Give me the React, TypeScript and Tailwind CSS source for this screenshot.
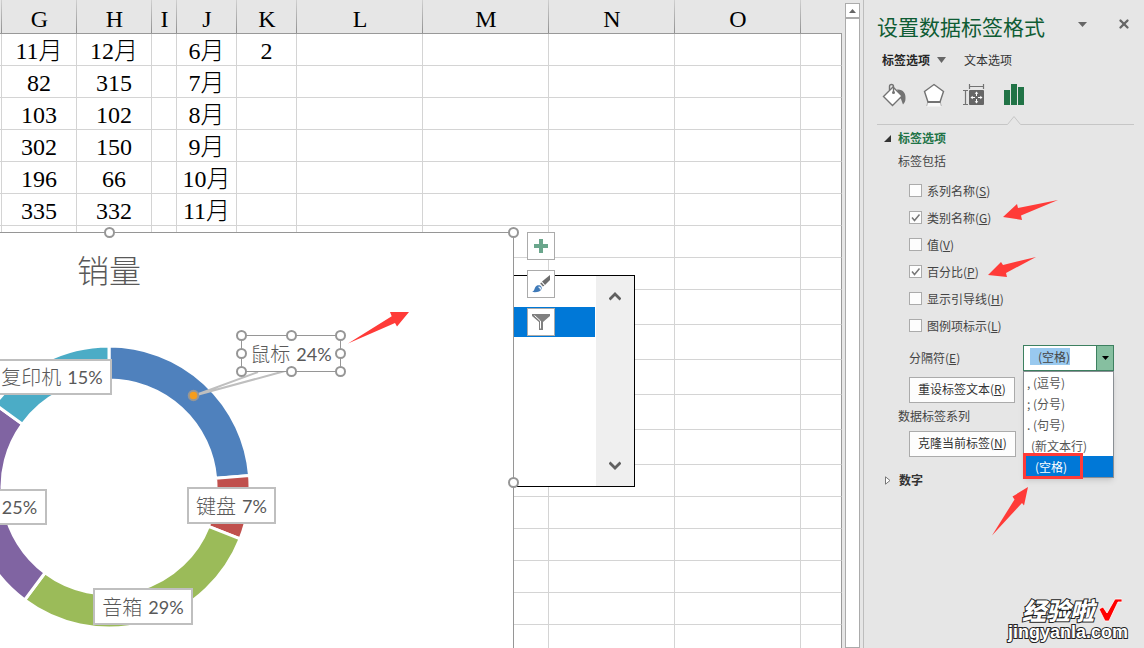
import React, { useState } from 'react';
import { X } from 'lucide-react';

const COLUMNS = [
  { key: 'F', width: 'w-[2px]', title: '' },
  { key: 'G', width: 'w-[75px]', title: 'G' },
  { key: 'H', width: 'w-[75px]', title: 'H' },
  { key: 'I', width: 'w-[25px]', title: 'I' },
  { key: 'J', width: 'w-[60px]', title: 'J' },
  { key: 'K', width: 'w-[60px]', title: 'K' },
  { key: 'L', width: 'w-[126px]', title: 'L' },
  { key: 'M', width: 'w-[126px]', title: 'M' },
  { key: 'N', width: 'w-[126px]', title: 'N' },
  { key: 'O', width: 'w-[126px]', title: 'O' },
  { key: 'P', width: '', title: '' },
];

const ROWS: { cells: string[]; tall?: boolean }[] = [
  { cells: ['', '11月', '12月', '', '6月', '2'] },
  { cells: ['', '82', '315', '', '7月'] },
  { cells: ['', '103', '102', '', '8月'] },
  { cells: ['', '302', '150', '', '9月'] },
  { cells: ['', '196', '66', '', '10月'] },
  { cells: ['', '335', '332', '', '11月'] },
  { cells: [] },
  { cells: [] },
  { cells: [], tall: true },
  { cells: [], tall: true },
  { cells: [], tall: true },
  { cells: [], tall: true },
  { cells: [], tall: true },
  { cells: [] },
  { cells: [] },
  { cells: [] },
  { cells: [] },
  { cells: [] },
  { cells: [] },
];

// 实际占比，标签上显示的是取整后的值
const SLICES = [
  { percent: 23.7, color: '#4f81bd' },
  { percent: 7.3, color: '#c0504d' },
  { percent: 29.2, color: '#9bbb59' },
  { percent: 24.8, color: '#8064a2' },
  { percent: 15, color: '#4bacc6' },
];

const LABELS = [
  { name: '复印机', percent: '15%', box: '-left-2 top-[126px] w-[120px] h-9 border-2 border-[#bfbfbf]' },
  { name: '', percent: '25%', box: '-left-2 top-[256px] w-[55px] h-9 border-2 border-[#bfbfbf]' },
  { name: '键盘', percent: '7%', box: 'left-[187px] top-[254px] w-[89px] h-[37px] border-2 border-[#bfbfbf]' },
  { name: '音箱', percent: '29%', box: 'left-[93px] top-[355px] w-[100px] h-[37px] border-2 border-[#bfbfbf]' },
  { name: '鼠标', percent: '24%', box: 'left-[241px] top-[102px] w-[100px] h-[37px] border border-[#969696]' },
];

const HANDLES = [
  [109, 232], [513, 232], [513, 482],
  [241, 335], [291, 335], [340, 335],
  [241, 353], [340, 353],
  [241, 371], [291, 371], [340, 371],
];

const OPTIONS = [
  { id: 'series', text: '系列名称', hotkey: 'S', checked: false },
  { id: 'category', text: '类别名称', hotkey: 'G', checked: true },
  { id: 'value', text: '值', hotkey: 'V', checked: false },
  { id: 'percent', text: '百分比', hotkey: 'P', checked: true },
  { id: 'leader', text: '显示引导线', hotkey: 'H', checked: false },
  { id: 'legend', text: '图例项标示', hotkey: 'L', checked: false },
];

const SEPARATORS = [
  { text: ', (逗号)', pad: 'pl-[3px]' },
  { text: '; (分号)', pad: 'pl-[3px]' },
  { text: '. (句号)', pad: 'pl-[3px]' },
  { text: '(新文本行)', pad: 'pl-[7px]' },
  { text: '(空格)', pad: 'pl-[11px]' },
];

// 圆环图的一段
function slicePath(from: number, to: number) {
  const cx = 109;
  const cy = 487;
  const point = (r: number, p: number) => {
    const a = (p / 100) * Math.PI * 2;
    return `${cx + r * Math.sin(a)} ${cy - r * Math.cos(a)}`;
  };
  return `M${point(141, from)}A141 141 0 0 1 ${point(141, to)}L${point(107, to)}A107 107 0 0 0 ${point(107, from)}Z`;
}

function Sheet() {
  return (
    <table className="w-full table-fixed border-separate border-spacing-0 font-['Liberation_Serif','Noto_Sans_CJK_SC',serif] text-2xl text-black">
      <thead>
        <tr>
          {COLUMNS.map((col) => (
            <th
              key={col.key}
              className={`h-[34px] border-b border-[#999] bg-[#e6e6e6] p-0 pt-1 leading-7 font-normal ${col.width} ${
                col.key === 'P' ? '' : 'bg-[linear-gradient(#d0d0d0,#909090)] bg-[length:1px_100%] bg-right bg-no-repeat'
              }`}
            >
              {col.title}
            </th>
          ))}
        </tr>
      </thead>
      <tbody>
        {ROWS.map((row, i) => (
          <tr key={i}>
            {COLUMNS.map((col, j) => (
              <td
                key={col.key}
                className={`border-r border-b border-b-[#d4d4d4] bg-white p-0 text-center align-bottom leading-7 font-light whitespace-nowrap ${
                  row.tall ? 'h-[35px]' : 'h-8'
                } ${col.key === 'P' ? 'border-r-[#999]' : 'border-r-[#d4d4d4]'}`}
              >
                {row.cells[j]}
              </td>
            ))}
          </tr>
        ))}
      </tbody>
    </table>
  );
}

function ListBox() {
  return (
    <div className="absolute top-[275px] left-[513px] flex h-[212px] w-[122px] border border-black bg-white">
      <div className="flex-1 pt-[31px]">
        <div className="h-[30px] bg-[#0078d7]" />
      </div>
      <div className="ml-px flex w-[38px] flex-col items-center justify-between bg-[#efefef] py-4">
        <button type="button" aria-label="向上">
          <svg viewBox="0 0 12 9" className="h-[9px] w-3">
            <path d="M.5 7.500L6 2l5.500 5.500" fill="none" stroke="#606060" strokeWidth="2.800" />
          </svg>
        </button>
        <button type="button" aria-label="向下">
          <svg viewBox="0 0 12 9" className="h-[9px] w-3">
            <path d="M.5 1.500L6 7l5.500-5.500" fill="none" stroke="#606060" strokeWidth="2.800" />
          </svg>
        </button>
      </div>
    </div>
  );
}

function Chart() {
  let total = 0;
  return (
    <div className="absolute top-[232px] bottom-0 left-0 w-[514px] border-t border-r border-[#969696] bg-white text-[#595959]">
      <svg viewBox="0 233 513 415" className="h-[415px] w-[513px]">
        {SLICES.map((slice) => {
          const from = total;
          total += slice.percent;
          return (
            <path key={slice.color} d={slicePath(from, total)} fill={slice.color} stroke="#fff" strokeWidth="3" />
          );
        })}
        <path d="M258 372L193 396L285 371" fill="#fff" stroke="#bfbfbf" strokeWidth="2" />
      </svg>
      <h2 className="absolute top-[18px] left-[77px] font-['Noto_Sans_CJK_SC',sans-serif] text-[32px] leading-9 font-light">
        销量
      </h2>
      {LABELS.map((label) => (
        <div
          key={label.percent}
          className={`absolute flex items-center justify-center gap-1.5 bg-white font-light whitespace-nowrap ${label.box}`}
        >
          {label.name && (
            <span className="font-['Noto_Sans_CJK_SC',sans-serif] text-xl leading-8">{label.name}</span>
          )}
          <span className="font-[Lato,sans-serif] text-lg leading-8 font-normal">{label.percent}</span>
        </div>
      ))}
      <svg viewBox="0 233 513 415" className="absolute top-0 left-0 h-[415px] w-[513px] overflow-visible">
        {HANDLES.map(([x, y]) => (
          <circle key={`${x}-${y}`} cx={x + 0.5} cy={y + 0.5} r="4.5" fill="#fff" stroke="#969696" strokeWidth="2" />
        ))}
        <circle cx="193.5" cy="395.5" r="4.8" fill="#f59d1c" stroke="#969696" strokeWidth="2" />
        <path d="M348 343.500L391.700 316.300L390 312H409L397 326.500L395 323Z" fill="#ff3b38" />
      </svg>
    </div>
  );
}

function ChartTools() {
  const box = 'flex size-7 items-center justify-center border border-[#ababab] bg-white';
  return (
    <div className="absolute top-[232px] left-[527px] flex flex-col gap-2.5">
      <button type="button" className={box} aria-label="图表元素">
        <svg viewBox="0 0 14 14" className="size-3.5">
          <path d="M5 0h4v5h5v4H9v5H5V9H0V5h5z" fill="#6aa68c" />
        </svg>
      </button>
      <button type="button" className={box} aria-label="图表样式">
        <svg viewBox="0 0 18 18" className="size-[18px]">
          <path d="M18 0v5l-5 5-3-3.500z" fill="#6d6d6d" />
          <path d="M9.500 7L12.500 10.500L11 12L8 8.500z" fill="#6d6d6d" stroke="#fff" strokeWidth=".7" />
          <path d="M0 17c3-1 2-5 5-6.500c3-1.200 5.500 1 4.500 3.500c-1 3-5 3.500-9.500 3z" fill="#3f7ab8" />
          <path d="M6.500 12l1.500 .5 .5 2" fill="none" stroke="#fff" strokeWidth="1.200" />
        </svg>
      </button>
      <button type="button" className={box} aria-label="图表筛选器">
        <svg viewBox="0 0 18 16" className="h-4 w-[18px]">
          <path d="M0 0h18v2l-7 6v8H7V8L0 2z" fill="#808080" />
          <path d="M2.500 1.500l6 5.500v7.500" fill="none" stroke="#fff" strokeWidth="1" />
        </svg>
      </button>
    </div>
  );
}

function PaneIcons() {
  return (
    <div className="flex items-center gap-4 pl-[5px]">
      <button type="button" aria-label="填充与线条">
        <svg viewBox="0 0 24 24" className="size-6">
          <path d="M15 6.500c6-.5 9 4 8.500 9c0 3-1 4.500-2.500 6c-1-2-1-4-3-7z" fill="#737373" />
          <path d="M1.500 13.500L11 4l9 9-9.500 9.500z" fill="#fff" stroke="#737373" strokeWidth="1.400" />
          <path d="M7.500 7V3.500Q7.500 1.500 9.500 1.500T11.500 3.500V9" fill="none" stroke="#737373" strokeWidth="1.400" />
          <circle cx="11.500" cy="9.500" r="1.500" fill="#737373" />
        </svg>
      </button>
      <button type="button" aria-label="效果">
        <svg viewBox="0 0 24 24" className="size-6">
          <path d="M5.500 20h13l.8 3.500h-14.600z" fill="#f8f8f8" />
          <path d="M5.500 20l-.8 3M18.500 20l.8 3" stroke="#b5b5b5" />
          <path d="M12 1.500L21.500 8.500L18 19H6L2.500 8.500z" fill="#fff" stroke="#737373" strokeWidth="1.400" />
          <path d="M5.500 19h13" stroke="#737373" strokeWidth="2" />
        </svg>
      </button>
      <button type="button" aria-label="大小与属性">
        <svg viewBox="0 0 24 24" className="size-6">
          <path d="M7.500 3.500h14M7.500 1v5M21.500 1v5M3.500 7.500v14M1 7.500h5M1 21.500h5" stroke="#737373" fill="none" strokeWidth="1.200" />
          <rect x="7" y="7" width="15" height="15" rx="1" fill="#666" />
          <path d="M14.500 9v4M14.500 16v4M9 14.500h4M16 14.500h4" stroke="#fff" />
          <path d="M14.500 8.500l1.800 2.200h-3.600zM14.500 20.500l1.800-2.200h-3.600zM8.500 14.500l2.200-1.800v3.600zM20.500 14.500l-2.200-1.800v3.600z" fill="#fff" />
        </svg>
      </button>
      <button type="button" aria-label="标签选项">
        <svg viewBox="0 0 24 24" className="size-6">
          <path d="M2 7h6v15H2zM9 1h6v21H9zM16 4h6v18h-6z" fill="#217346" />
        </svg>
      </button>
    </div>
  );
}

function SeparatorSelect() {
  const [value, setValue] = useState('(空格)');
  return (
    <div className="relative w-[91px]">
      <select
        id="separator"
        value={value}
        onChange={(e) => setValue(e.target.value)}
        className="block h-[26px] w-full appearance-none border border-[#3d8060] bg-white bg-[linear-gradient(#99c9ef,#99c9ef)] bg-[length:40px_17px] bg-[position:6px_2px] bg-no-repeat pb-0.5 pl-3.5 text-xs text-[#444]"
      >
        {SEPARATORS.map((item) => (
          <option key={item.text}>{item.text}</option>
        ))}
      </select>
      <span className="pointer-events-none absolute top-0 right-0 flex h-[26px] w-[18px] items-center justify-center border border-[#3d8060] bg-[#86bfa0]">
        <svg viewBox="0 0 7 4" className="h-1 w-[7px]">
          <path d="M0 0h7L3.500 4z" fill="#000" />
        </svg>
      </span>
      <ul
        role="listbox"
        aria-label="分隔符"
        className="absolute top-[26px] left-0 w-full border border-[#8a8f94] bg-white leading-[21px] text-[#555] shadow-md"
      >
        {SEPARATORS.map((item) => (
          <li
            key={item.text}
            role="option"
            aria-selected={item.text === value}
            onClick={() => setValue(item.text)}
            className={`${item.pad} ${item.text === value ? 'bg-[#0078d7] text-white' : ''}`}
          >
            {item.text}
          </li>
        ))}
      </ul>
      <span className="pointer-events-none absolute top-[108px] left-0 h-[26px] w-[60px] border-3 border-[#ff3b38]" />
    </div>
  );
}

function FormatPane() {
  const [checked, setChecked] = useState<string[]>(OPTIONS.filter((o) => o.checked).map((o) => o.id));

  const toggle = (id: string) => {
    setChecked((prev) => (prev.includes(id) ? prev.filter((v) => v !== id) : [...prev, id]));
  };

  const button = 'block h-[26px] border border-[#ababab] bg-[#fdfdfd] px-2 pb-0.5 text-[#333]';

  return (
    <aside className="relative w-[281px] shrink-0 border-l border-[#bdbdbd] bg-[#e6e6e6] pl-[13px] font-['Noto_Sans_CJK_SC',sans-serif] text-xs leading-[18px] text-[#444]">
      <header className="flex items-start justify-between pt-2.5 pr-[13px]">
        <h1 className="text-[21px] leading-8 font-normal text-[#0f5c34]">设置数据标签格式</h1>
        <div className="flex items-center gap-[30px] pt-[7px] text-[#666]">
          <button type="button" aria-label="任务窗格选项">
            <svg viewBox="0 0 9 5" className="h-[5px] w-[9px]">
              <path d="M0 0h9L4.500 5z" fill="#666" />
            </svg>
          </button>
          <button type="button" aria-label="关闭">
            <X size={14} strokeWidth={4} />
          </button>
        </div>
      </header>

      <nav className="mt-[9px] flex items-center pl-[5px] text-[#333]">
        <button type="button" className="flex items-center gap-[7px] font-bold text-[#262626]">
          标签选项
          <svg viewBox="0 0 9 6" className="h-1.5 w-[9px]">
            <path d="M0 0h9L4.500 6z" fill="#666" />
          </svg>
        </button>
        <button type="button" className="ml-[18px]">文本选项</button>
      </nav>

      <div className="mt-3.5">
        <PaneIcons />
      </div>
      <svg viewBox="0 0 257 10" className="mt-2 block h-2.5 w-[257px]">
        <path d="M0 9.500H130.500L137 1.500L143.500 9.500H257" fill="none" stroke="#c6c6c6" />
      </svg>

      <button type="button" className="mt-1 flex items-center gap-[7px] pl-[7px] font-bold text-[#217346]">
        <svg viewBox="0 0 7 7" className="size-[7px]">
          <path d="M7 0v7H0z" fill="#333" />
        </svg>
        标签选项
      </button>
      <p className="mt-[5px] pl-[21px]">标签包括</p>

      <div className="mt-[7px] pl-8">
        {OPTIONS.map((opt) => (
          <label key={opt.id} className="flex h-[27px] items-center gap-[5px]">
            <input
              type="checkbox"
              checked={checked.includes(opt.id)}
              onChange={() => toggle(opt.id)}
              className="peer size-[13px] appearance-none border border-[#ababab] bg-[#fdfdfd]"
            />
            <svg viewBox="0 0 13 13" className="pointer-events-none invisible -ml-[18px] size-[13px] peer-checked:visible">
              <path d="M3 6.500l2.500 3L10.500 3.500" fill="none" stroke="#777" strokeWidth="1.500" />
            </svg>
            <span>
              {opt.text}(<u>{opt.hotkey}</u>)
            </span>
          </label>
        ))}
      </div>

      <div className="mt-1.5 flex items-center justify-between pr-[30px] pl-8">
        <label htmlFor="separator">
          分隔符(<u>E</u>)
        </label>
        <SeparatorSelect />
      </div>
      <div className="mt-1.5 pl-8">
        <button type="button" className={button}>
          重设标签文本(<u>R</u>)
        </button>
      </div>
      <p className="mt-1 pl-[21px]">数据标签系列</p>
      <div className="mt-1.5 pl-8">
        <button type="button" className={button}>
          克隆当前标签(<u>N</u>)
        </button>
      </div>
      <button type="button" className="mt-3.5 flex items-center gap-2 pl-2 font-bold text-[#333]">
        <svg viewBox="0 0 6 9" className="h-[9px] w-1.5">
          <path d="M.5 .8L5 4.500L.5 8.200z" fill="#fff" stroke="#777" />
        </svg>
        数字
      </button>

      {/* 红色箭头 */}
      <svg viewBox="864 0 280 648" className="pointer-events-none absolute top-0 left-0 h-[648px] w-[280px]">
        <g fill="#ff3b38">
          <path d="M1058 200L1018 208L1017 204L1003 217L1022 220L1021 215.500z" />
          <path d="M1036 257L1003 265L1001 262L988 275L1007 277L1006 273z" />
          <path d="M992 535.500L1014.500 499.500L1012.500 496.500L1028 487L1024 505.500L1022 503z" />
        </g>
      </svg>

      <div className="absolute right-4 bottom-1.5 text-right font-bold text-white">
        <div className="flex items-center justify-end gap-1 pr-1.5">
          <span className="text-2xl leading-6 font-black italic [-webkit-text-stroke:2px_#222] [paint-order:stroke_fill]">
            经验啦
          </span>
          <svg viewBox="0 0 24 24" className="size-6">
            <path d="M1 11l4-2 4 6L17 1h7v3h-4L11 23H7z" fill="#f00" stroke="#fff" strokeWidth=".8" />
          </svg>
        </div>
        <div className="font-['Liberation_Sans',sans-serif] text-lg leading-5 [-webkit-text-stroke:2px_#222] [paint-order:stroke_fill]">
          jingyanla.com
        </div>
      </div>
    </aside>
  );
}

export default function App() {
  return (
    <div className="flex h-screen overflow-hidden bg-[#e6e6e6]">
      <main className="relative min-w-0 flex-1 overflow-hidden">
        <Sheet />
        <ListBox />
        <Chart />
        <ChartTools />
      </main>
      <div className="flex w-[21px] shrink-0 flex-col px-[3px] pt-[3px]">
        <button
          type="button"
          aria-label="向上滚动"
          className="flex h-[15px] items-center justify-center border border-[#ababab] bg-white"
        >
          <svg viewBox="0 0 7 4" className="h-1 w-[7px]">
            <path d="M3.500 0L7 4H0z" fill="#666" />
          </svg>
        </button>
        <div className="flex-1 border border-[#ababab] bg-white" />
      </div>
      <FormatPane />
    </div>
  );
}
